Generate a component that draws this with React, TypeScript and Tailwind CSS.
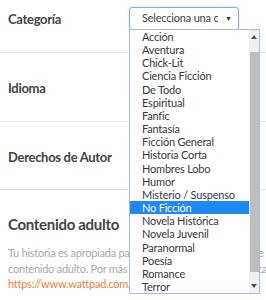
const categories = [
  "Acción",
  "Aventura",
  "Chick-Lit",
  "Ciencia Ficción",
  "De Todo",
  "Espiritual",
  "Fanfic",
  "Fantasía",
  "Ficción General",
  "Historia Corta",
  "Hombres Lobo",
  "Humor",
  "Misterio / Suspenso",
  "No Ficción",
  "Novela Histórica",
  "Novela Juvenil",
  "Paranormal",
  "Poesía",
  "Romance",
  "Terror",
];

function Row({ label, children, className = "" }: { label: string; children?: React.ReactNode; className?: string }) {
  return (
    <div className={`flex items-start border-b border-[#e6e6e6] pl-2 ${className}`}>
      <div className="w-[121px] shrink-0 text-[13px] leading-[20px] font-bold tracking-[-0.3px] text-[#444]">{label}</div>
      {children}
    </div>
  );
}

function Dropdown() {
  return (
    <div className="absolute left-[129px] top-[29px] w-[131px] h-[265px] border border-[#a9bbe0] bg-white flex">
      <ul className="flex-1 min-w-0">
        {categories.map((c) => (
          <li
            key={c}
            className={`h-[13.16px] pl-[12px] text-[11px] tracking-[-0.2px] leading-[13.16px] whitespace-nowrap ${
              c === "No Ficción" ? "bg-[#1e88f5] text-white" : "text-[#3a3a3a]"
            }`}
          >
            {c}
          </li>
        ))}
      </ul>
      {/* scrollbar */}
      <div className="w-[10px] bg-[#f1f1f1] flex flex-col items-center">
        <div className="h-[14px] flex items-center justify-center">
          <svg width="6" height="4" viewBox="0 0 6 4">
            <path d="M0 4 L3 0 L6 4 Z" fill="#505050" />
          </svg>
        </div>
        <div className="mt-[8px] w-[9px] h-[220px] bg-[#bdbdbd]" />
        <div className="flex-1" />
        <div className="h-[14px] flex items-center justify-center">
          <svg width="6" height="4" viewBox="0 0 6 4">
            <path d="M0 0 L6 0 L3 4 Z" fill="#505050" />
          </svg>
        </div>
      </div>
    </div>
  );
}

export default function App() {
  return (
    <div
      className="relative w-[266px] h-[300px] overflow-hidden bg-white"
      style={{ fontFamily: "Lato, 'Noto Sans', sans-serif" }}
    >
      <Row label="Categoría" className="h-[53px] pt-[9px]">
        <div className="mt-[-2px] w-[110px] h-[23px] rounded-[3px] border border-[#86b1e6] shadow-[0_0_2px_rgba(102,175,233,0.5)] flex items-center pl-[12px] pr-[6px]">
          <span className="w-[76px] overflow-hidden whitespace-nowrap text-[11px] tracking-[-0.2px] text-[#444]">
            Selecciona una categoría
          </span>
          <span className="ml-auto text-[7px] text-[#333]">▼</span>
        </div>
      </Row>
      <Row label="Idioma" className="h-[69px] pt-[25px]" />
      <Row label="Derechos de Autor" className="h-[68px] pt-[25px]" />
      <div className="pl-2 pt-[24px]">
        <div className="text-[15px] leading-[20px] font-bold tracking-[-0.3px] text-[#444]">Contenido adulto</div>
        <div className="mt-[11px] text-[11px] tracking-[-0.25px] leading-[15.5px] text-[#aaa] whitespace-nowrap">
          <p className="flex">
            <span className="w-[250px] shrink-0 overflow-hidden">Tu historia es apropiada para todas las edades o contien</span>
            <span>e 'Adulto'</span>
          </p>
          <p className="flex">
            <span className="w-[250px] shrink-0 overflow-hidden">contenido adulto. Por más información, consul</span>
            <span>ta</span>
          </p>
          <p className="text-[#ee7f3b]">https://www.wattpad.com/guidelines</p>
        </div>
      </div>
      <Dropdown />
    </div>
  );
}
